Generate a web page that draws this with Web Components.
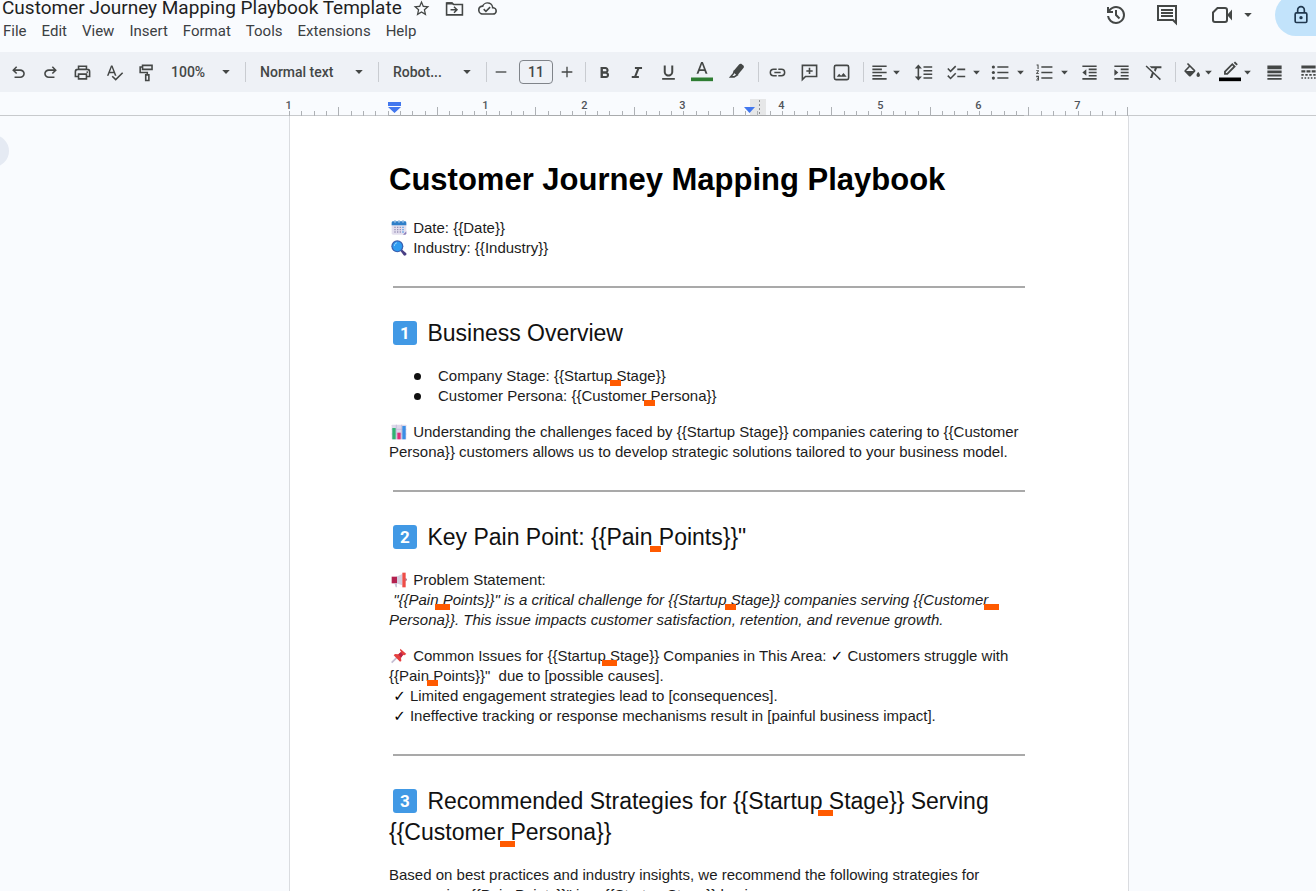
<!DOCTYPE html>
<html lang="en">
<head>
<meta charset="utf-8">
<title>Customer Journey Mapping Playbook Template</title>
<style>
  html, body { margin: 0; height: 100%; }
  body { background: #f9fbfe; color: #444746; font-family: Roboto, "Liberation Sans", sans-serif; overflow: hidden; }
</style>
</head>
<body>
<docs-app></docs-app>

<script>
const define = (name, html, setup) => {
  const template = document.createElement('template');
  template.innerHTML = html;
  customElements.define(name, class extends HTMLElement {
    constructor() {
      super();
      this.attachShadow({ mode: 'open' }).append(template.content.cloneNode(true));
    }
    connectedCallback() { if (setup) setup(this, this.shadowRoot); }
  });
};

const S = 'fill="none" stroke="currentColor" stroke-width="2"';
const ICONS = {
  undo: '<path d="M7 19v-2h7.1q1.6 0 2.7-1t1.2-2.5-1.2-2.5-2.7-1H7.8l2.6 2.6L9 14 4 9l5-5 1.4 1.4L7.8 8h6.3q2.4 0 4.2 1.6T20 13.5t-1.7 3.9T14.1 19z"/>',
  redo: '<path transform="matrix(-1 0 0 1 24 0)" d="M7 19v-2h7.1q1.6 0 2.7-1t1.2-2.5-1.2-2.5-2.7-1H7.8l2.6 2.6L9 14 4 9l5-5 1.4 1.4L7.8 8h6.3q2.4 0 4.2 1.6T20 13.5t-1.7 3.9T14.1 19z"/>',
  print: `<path ${S} d="M7 8V4h10v4M6 17H3v-6q0-3 3-3h12q3 0 3 3v6h-3M7 14h10v6H7z"/><circle cx="18" cy="11.5" r="1.2"/>`,
  spell: '<path d="M12.45 16h2.09L9.43 3H7.57L2.46 16h2.09l1.12-3h5.64zM6.43 11 8.5 5.48 10.57 11zm15.16.59-8.09 8.09L9.83 16l-1.41 1.41 5.09 5.09L23 13z"/>',
  paint: `<path ${S} d="M7 3h12v5H7zM7 5H4v7h9v3M11 15h4v7h-4z"/>`,
  minus: '<path d="M4 11h16v2H4z"/>',
  plus: '<path d="M11 4h2v7h7v2h-7v7h-2v-7H4v-2h7z"/>',
  bold: '<path d="M15.6 11.8c1-.7 1.6-1.8 1.6-2.8 0-2.3-1.8-4-4-4H7v14h7c2.1 0 3.7-1.7 3.7-3.8 0-1.5-.8-2.8-2.1-3.4zM10 7.5h3a1.5 1.5 0 0 1 0 3h-3zm3.5 9H10v-3h3.5a1.5 1.5 0 0 1 0 3z"/>',
  italic: '<path d="M10 5v2.5h2.7l-3.5 9H6V19h9v-2.5h-3l3.5-9H19V5z"/>',
  underline: '<path d="M12 17c3.3 0 6-2.7 6-6V3h-2.5v8a3.5 3.5 0 0 1-7 0V3H6v8c0 3.3 2.7 6 6 6zM4 19v2h16v-2z"/>',
  color: '<path d="M11 1 6 14h2.1l1.2-3.2h5.4l1.2 3.2H18L13 1zM9.9 9 12 3.4 14.1 9z"/><path fill="#2e7d32" d="M0 18h24v4H0z"/>',
  marker: `<path ${S} d="m9 11-1 2.500L4.500 17.500H9L13 15z"/><path d="m8 10.500 7.500-9q1.200-1 2.500-.500l3 2.500q.8 1.200 0 2.500L13.500 15z"/>`,
  link: '<path d="M3.9 12c0-1.71 1.39-3.1 3.1-3.1h4V7H7a5 5 0 0 0 0 10h4v-1.9H7c-1.71 0-3.1-1.39-3.1-3.1zM8 13h8v-2H8zm9-6h-4v1.9h4a3.1 3.1 0 0 1 0 6.2h-4V17h4a5 5 0 0 0 0-10z"/>',
  addcomment: `<path ${S} d="M3 21V3h18v14H7z"/><path d="M11 6h2v3h3v2h-3v3h-2v-3H8V9h3z"/>`,
  image: `<rect ${S} x="3" y="3" width="18" height="18" rx="2"/><path d="m6 17.500 3-4 2.500 2.500 3-3.500 4 5z"/>`,
  align: '<path d="M3 3h18v2H3zm0 4h12v2H3zm0 4h18v2H3zm0 4h12v2H3zm0 4h18v2H3z"/>',
  spacing: '<path d="M12 4h11v2H12zm0 4.7h11v2H12zm0 4.600h11v2H12zM12 18h11v2H12zM5.500 2 1 7h3.500v10H1l4.500 5 4.500-5H6.500V7H10z"/>',
  checklist: `<path ${S} d="m1 7 3.500 3.500L11 4M1 16l3.500 3.500L11 13"/><path d="M13 7h10v2H13zm0 9h10v2H13z"/>`,
  bullets: '<circle cx="3" cy="5" r="2"/><circle cx="3" cy="12" r="2"/><circle cx="3" cy="19" r="2"/><path d="M8 4h14v2H8zM8 11h14v2H8zm0 7h14v2H8z"/>',
  numbers: '<path d="M8 4h14v2H8zm0 7h14v2H8zm0 7h14v2H8zM2 2h2.500v5.500H3.200V3.200H2zm-.5 7H5v1.200l-2 2.600h2V14H1.500v-1.200l2-2.600h-2zm0 7H5v6H1.500v-1.200h2.200v-.8H2.500v-1.200h1.200v-.8H1.500z"/>',
  outdent: '<path d="M3 3h18v2H3zm8 4h10v2H11zm0 4h10v2H11zm0 4h10v2H11zm-8 4h18v2H3zm5-11v8l-5-4z"/>',
  indent: '<path d="M3 3h18v2H3zm8 4h10v2H11zm0 4h10v2H11zm0 4h10v2H11zm-8 4h18v2H3zM3 8v8l5-4z"/>',
  clear: '<path d="m3.300 3-1.300 1.300L10 12l-2.500 7h2.800l1.900-5.100L20 21.700l1.400-1.400zM7 4l2.600 2.500h4l-1 2.700 2 2 1.800-4.700H22V4z"/>',
  fill: '<path d="M16.600 8.900 7.600 0 6.200 1.400l2.400 2.400-5.200 5.200c-.6.600-.6 1.500 0 2.100l5.500 5.500c.6.600 1.500.600 2.100 0l5.500-5.500c.6-.6.600-1.500 0-2.200zM5.200 10 10 5.200l4.800 4.800zM20.500 11.500s-2.200 2.400-2.200 3.900a2.200 2.200 0 0 0 4.400 0c0-1.500-2.200-3.900-2.200-3.900z"/>',
  pencil: `<path ${S} d="m6.500 11.500 8-8 2.500 2.500-8 8H6.500z"/><path d="m16 2 1.500-1.500 3 3L19 5z"/><path fill="#000" d="M0 18h24v4H0z"/>`,
  weight: '<path d="M3 3h18v5H3zm0 6.500h18V13H3zm0 5h18V17H3zm0 4.500h18v2H3z"/>',
  dash: '<path d="M3 3h18v4H3zm0 6h5v3H3zm6.500 0h5v3h-5zm6.500 0h5v3h-5zM3 14h3v2H3zm5 0h3v2H8zm5 0h3v2h-3zm5 0h3v2h-3zM3 18h2v2H3zm4 0h2v2H7zm4 0h2v2h-2zm4 0h2v2h-2zm4 0h2v2h-2z"/>',
  star: '<path d="m22 9.240-7.190-.62L12 2 9.190 8.630 2 9.240l5.460 4.730L5.820 21 12 17.270 18.180 21l-1.630-7.030zM12 15.400l-3.760 2.270 1-4.280-3.320-2.880 4.380-.38L12 6.100l1.710 4.040 4.380.38-3.320 2.880 1 4.280z"/>',
  move: `<path ${S} d="M2 5h7l2 2h11v13H2z"/><path d="M2 4h7l2 3H2zM12 9l4.500 4.500L12 18l-1.300-1.300 2.200-2.200H7v-2h5.900l-2.200-2.200z"/>`,
  cloud: '<path d="M19.350 10.040A7.490 7.490 0 0 0 12 4C9.110 4 6.600 5.640 5.350 8.040A5.990 5.990 0 0 0 0 14c0 3.310 2.690 6 6 6h13c2.760 0 5-2.240 5-5 0-2.640-2.050-4.780-4.650-4.960zM19 18H6a4 4 0 0 1 0-8h.71a5.500 5.500 0 0 1 10.790 2H19a3 3 0 0 1 0 6zm-9-3.820-2.090-2.090L6.500 13.500 10 17l6.010-6.010-1.410-1.410z"/>',
  history: '<path d="M12 21q-3.450 0-6.010-2.290T3.050 13H5.100q.35 2.600 2.310 4.300T12 19q2.930 0 4.960-2.040T19 12t-2.040-4.960T12 5q-1.730 0-3.230.8T6.250 8H9v2H3V4h2v2.350q1.280-1.600 3.110-2.470T12 3q1.880 0 3.510.71t2.850 1.930 1.930 2.850T21 12t-.71 3.510-1.930 2.850-2.850 1.930T12 21m2.800-4.800L11 12.400V7h2v4.600l3.200 3.200z"/>',
  comment: `<path ${S} d="M3 3h18v17l-3-3H3z"/><path d="M6 6h12v2H6zm0 3h12v2H6zm0 3h12v2H6z"/>`,
  camera: `<path ${S} d="M7.500 5H15q2 0 2 2v10q0 2-2 2H5q-2 0-2-2V9.500z"/><path d="m18 11 4-4.500v11L18 13z"/>`,
  lock: `<rect ${S} x="5" y="9.500" width="14" height="11.500" rx="1.500"/><path ${S} d="M8 9V6a4 4 0 0 1 8 0v3"/><circle cx="12" cy="15.200" r="2"/>`,
  caret: '<path d="M3 7h18l-9 10z"/>',
  calendar: '<rect x="1" y="4" width="22" height="18" rx="2" fill="#e3dfee"/><path d="M1 8V4q0-2 2-2h18q2 0 2 2v4z" fill="#2f7fc9"/><path d="M5 0h2v4H5zm6 0h2v4h-2zm6 0h2v4h-2z" fill="#9fc3e8"/><path d="M6 10v9m4-9v9m4-9v9" stroke="#9a93b8" stroke-width="2" stroke-dasharray="2 1.500" fill="none"/><path d="M18 10v9" stroke="#4b9ae8" stroke-width="2" stroke-dasharray="2 1.500" fill="none"/><path d="m18 22 5-5v3q0 2-2 2z" fill="#8a7cb8"/>',
  search: '<path d="m14 16 2-2 7 6q1 2-1 3t-3 0z" fill="#4a3f84"/><circle cx="9.500" cy="9.500" r="9" fill="#3b5fae"/><circle cx="9.500" cy="9.500" r="7.200" fill="#2e9bf0"/><path d="M5 9q0-4 4-5" stroke="#8fd0ff" stroke-width="1.500" fill="none"/>',
  chart: '<rect x="1" y="1" width="22" height="22" rx="1" fill="#ddd8ea"/><path d="M1 8h22M1 15h22M8 1v22M16 1v22" stroke="#bdb5d4"/><path d="M2 6h5v17H2z" fill="#2fb573"/><path d="M9.500 13h5v10h-5z" fill="#e0307a"/><path d="M17 3h5v20h-5z" fill="#3a8ee6"/>',
  megaphone: '<path d="m8 7 9-4v17l-9-3z" fill="#d5cfe0"/><path d="M1 7h8v10H1z" fill="#b3214f"/><path d="M17 1h5v22h-5z" fill="#ee4d48"/><path d="M22 9q3 2.500 0 5z" fill="#8d2946"/><path d="M5 17h4v6H7z" fill="#c9c3d6"/>',
  pin: '<path d="M9 14 1 22" stroke="#c4bdd2" stroke-width="2.500"/><path d="m14 1 9 8-3 2-2-.5-3 4 .5 5-2 1L4 11l2-2 5 .5 4-4-1.500-2z" fill="#e5403f"/><path d="m11 9.500 4 5 3-4-3-4z" fill="#b92347"/>'
};

define('svg-icon', `<style>
  :host { display: inline-block; width: 20px; height: 20px; flex: none; }
  svg { display: block; width: 100%; height: 100%; overflow: visible; fill: currentColor; }
</style><svg viewBox="0 0 24 24" aria-hidden="true"></svg>`,
(el, root) => { root.querySelector('svg').innerHTML = ICONS[el.getAttribute('name')]; });

define('tool-button', `<style>
  :host { display: block; flex: none; width: 32px; }
  :host([wide]) { width: 36px; }
  :host([menu]) { width: 44px; }
  :host([menu][tight]) { width: 39px; }
  :host([small]) { width: 24px; }
  button { all: unset; box-sizing: border-box; display: flex; align-items: center; width: 100%; height: 28px; cursor: pointer; color: inherit; }
  .face { flex: 1; display: flex; justify-content: center; }
  .caret { width: 9px; height: 9px; margin-right: 4px; display: none; }
  :host([menu]) .caret { display: block; }
  svg-icon { width: 19px; height: 19px; }
  :host([small]) svg-icon { width: 16px; height: 16px; }
  :host([swatch]) .face svg-icon { width: 22px; height: 22px; }
</style><button type="button"><span class="face"></span><svg-icon class="caret" name="caret"></svg-icon></button>`,
(el, root) => {
  root.querySelector('button').setAttribute('aria-label', el.getAttribute('label'));
  root.querySelector('.face').innerHTML = `<svg-icon name="${el.getAttribute('icon')}"></svg-icon>`;
});

define('tool-select', `<style>
  :host { display: flex; flex: none; align-items: center; position: relative; width: 77px; }
  :host([size="medium"]) { width: 99px; }
  :host([size="large"]) { width: 124px; }
  select { appearance: none; border: 0; margin: 0; background: none; width: 100%; height: 28px; padding: 0 20px 0 9px; font: 500 14px Roboto, sans-serif; color: inherit; }
  :host([size]) select { padding-left: 12px; }
  svg-icon { position: absolute; right: 8px; width: 10px; height: 10px; pointer-events: none; }
</style><select><option></option></select><svg-icon name="caret"></svg-icon>`,
(el, root) => {
  root.querySelector('select').setAttribute('aria-label', el.getAttribute('label'));
  root.querySelector('option').textContent = el.getAttribute('value');
});

define('tool-divider', `<style>
  :host { display: block; flex: none; width: 1px; height: 20px; margin: 0 2px 0 6px; background: #c9ccd1; }
</style>`);

define('docs-header', `<style>
  :host { display: flex; justify-content: space-between; height: 52px; flex: none; }
  .title { display: flex; align-items: center; gap: 14px; height: 16px; padding-left: 2px; color: #1f1f1f; }
  h1 { margin: 0 -4px 0 0; font: 400 19px/16px Roboto, sans-serif; white-space: nowrap; }
  .title svg-icon { width: 19px; height: 19px; color: #444746; }
  nav { display: flex; gap: 15px; padding: 5px 0 0 3px; }
  nav a { font-size: 15px; line-height: 20px; color: #3c4043; text-decoration: none; }
  .actions { display: flex; align-items: center; height: 30px; }
  .actions svg-icon { width: 24px; height: 24px; }
  .actions .history { margin-right: 27px; }
  .actions .comment { margin-right: 31px; }
  .actions .caret { width: 10px; height: 10px; margin: 0 22px 0 9px; }
  button { all: unset; box-sizing: border-box; flex: none; width: 41px; height: 42px; padding-left: 16px; display: flex; align-items: center; background: #c2e3fb; border-radius: 21px 0 0 21px; color: #20384f; }
  .actions button svg-icon { width: 20px; height: 20px; }
</style>
<div>
  <div class="title"><h1>Customer Journey Mapping Playbook Template</h1>
    <svg-icon name="star"></svg-icon><svg-icon name="move"></svg-icon><svg-icon name="cloud"></svg-icon></div>
  <nav><a href="#">File</a><a href="#">Edit</a><a href="#">View</a><a href="#">Insert</a><a href="#">Format</a><a href="#">Tools</a><a href="#">Extensions</a><a href="#">Help</a></nav>
</div>
<div class="actions">
  <svg-icon class="history" name="history"></svg-icon><svg-icon class="comment" name="comment"></svg-icon>
  <svg-icon name="camera"></svg-icon><svg-icon class="caret" name="caret"></svg-icon>
  <button type="button" aria-label="Share"><svg-icon name="lock"></svg-icon></button>
</div>`);

define('docs-toolbar', `<style>
  :host { display: flex; align-items: center; flex: none; height: 40px; padding-left: 2px; background: #eef1f6; overflow: hidden; }
  input { box-sizing: border-box; flex: none; width: 34px; height: 24px; margin: 0 2px 0 6px; padding: 0; border: 1px solid #80848a; border-radius: 4px; background: none; text-align: center; font: 500 14px Roboto, sans-serif; color: inherit; }
</style>
<tool-button icon="undo" label="Undo"></tool-button>
<tool-button icon="redo" label="Redo"></tool-button>
<tool-button icon="print" label="Print"></tool-button>
<tool-button icon="spell" label="Spelling"></tool-button>
<tool-button icon="paint" label="Paint format"></tool-button>
<tool-select value="100%" label="Zoom"></tool-select>
<tool-divider></tool-divider>
<tool-select size="large" value="Normal text" label="Styles"></tool-select>
<tool-divider></tool-divider>
<tool-select size="medium" value="Robot..." label="Font"></tool-select>
<tool-divider></tool-divider>
<tool-button small icon="minus" label="Decrease font size"></tool-button>
<input value="11" aria-label="Font size">
<tool-button small icon="plus" label="Increase font size"></tool-button>
<tool-divider></tool-divider>
<tool-button icon="bold" label="Bold"></tool-button>
<tool-button icon="italic" label="Italic"></tool-button>
<tool-button icon="underline" label="Underline"></tool-button>
<tool-button wide swatch icon="color" label="Text color"></tool-button>
<tool-button icon="marker" label="Highlight color"></tool-button>
<tool-divider></tool-divider>
<tool-button icon="link" label="Insert link"></tool-button>
<tool-button icon="addcomment" label="Add comment"></tool-button>
<tool-button icon="image" label="Insert image"></tool-button>
<tool-divider></tool-divider>
<tool-button menu tight icon="align" label="Align"></tool-button>
<tool-button wide icon="spacing" label="Line spacing"></tool-button>
<tool-button menu icon="checklist" label="Checklist"></tool-button>
<tool-button menu icon="bullets" label="Bulleted list"></tool-button>
<tool-button menu icon="numbers" label="Numbered list"></tool-button>
<tool-button icon="outdent" label="Decrease indent"></tool-button>
<tool-button icon="indent" label="Increase indent"></tool-button>
<tool-button icon="clear" label="Clear formatting"></tool-button>
<tool-divider></tool-divider>
<tool-button menu tight icon="fill" label="Fill color"></tool-button>
<tool-button menu tight swatch icon="pencil" label="Border color"></tool-button>
<tool-button wide icon="weight" label="Border width"></tool-button>
<tool-button icon="dash" label="Border dash"></tool-button>`);

define('docs-ruler', `<style>
  :host { display: grid; grid-template-columns: 289fr 840px 187fr; flex: none; height: 23px; border-bottom: 1px solid #c8cacd; }
  svg { grid-column: 2; display: block; width: 840px; height: 24px; overflow: visible; }
  text { font: 500 11px Roboto, sans-serif; fill: #50545a; text-anchor: middle; }
</style><svg aria-label="Ruler"></svg>`,
(el, root) => {
  const inch = 838 / 8.5;
  let out = '<path d="M99 23.500h636" stroke="#a9abad"/><rect x="461" y="7" width="16" height="16" fill="#e6e7e8"/><path d="M470.500 8v14" stroke="#8b8d90" stroke-dasharray="2 2"/>';
  for (let i = 0; i <= 68; i++) {
    const x = Math.round(i * inch / 8) + .5;
    if (i % 8 === 0 && i < 68) {
      const n = i / 8 - 1;
      if (n) out += `<text x="${x - 1}" y="17">${Math.abs(n)}</text>`;
    }
    out += `<path d="M${x} ${i % 8 === 4 ? 15 : 19}V24" stroke="#aeb1b5"/>`;
  }
  out += '<path d="M99 10h13v4H99zM99 15h13l-6.500 6z" fill="#4277ee"/><path d="M455 15h11l-5.500 6z" fill="#4277ee"/>';
  root.querySelector('svg').innerHTML = out;
});

define('gap-mark', `<style>
  :host { position: relative; }
  i { position: absolute; left: -2px; bottom: -2px; width: 11px; height: 6px; background: #ff5a00; }
  :host([wide]) i { left: -4px; width: 15px; }
</style><i></i>`);

define('key-cap', `<style>
  :host { display: inline-block; box-sizing: border-box; width: 24px; height: 24px; margin: 0 4px; border-radius: 3px; background: #4199e5; color: #fff; font: 700 17px/24px Roboto, sans-serif; text-align: center; vertical-align: 2px; }
</style><slot></slot>`);

define('docs-document', `<style>
  :host { box-sizing: border-box; display: block; padding: 44px 100px 0 99px; border: solid #dadce0; border-width: 0 1px; background: #fff; color: #1c1c1c; font: 15px/20px "Liberation Sans", Arial, sans-serif; }
  h1 { margin: 0 0 18px; font-size: 31px; line-height: 40px; color: #000; }
  h2 { margin: 0 0 17px; font-size: 23px; line-height: 31px; font-weight: 400; color: #111; }
  p, ul { margin: 0 0 16px; }
  hr { margin: 28px 3px 30px 4px; border: 0; height: 2px; background: #a9a9a9; }
  ul { padding-left: 49px; list-style: none; }
  li { position: relative; }
  li::before { content: ""; position: absolute; left: -24px; top: 7px; width: 7px; height: 7px; border-radius: 50%; background: #111; }
  svg-icon { width: 16px; height: 16px; margin: 0 2px; vertical-align: -3px; }
  .check { font: 700 15px/16px "DejaVu Sans", sans-serif; color: #000; }
</style>
<h1>Customer Journey Mapping Playbook</h1>
<p><svg-icon name="calendar"></svg-icon> Date: {{Date}}<br><svg-icon name="search"></svg-icon> Industry: {{Industry}}</p>
<hr>
<h2><key-cap>1</key-cap> Business Overview</h2>
<ul><li>Company Stage: {{Startup<gap-mark></gap-mark> Stage}}</li><li>Customer Persona: {{Customer<gap-mark></gap-mark> Persona}}</li></ul>
<p><svg-icon name="chart"></svg-icon> Understanding the challenges faced by {{Startup Stage}} companies catering to {{Customer Persona}} customers allows us to develop strategic solutions tailored to your business model.</p>
<hr>
<h2><key-cap>2</key-cap> Key Pain Point: {{Pain<gap-mark></gap-mark> Points}}"</h2>
<p><svg-icon name="megaphone"></svg-icon> Problem Statement:<br><em>&nbsp;"{{Pain<gap-mark wide></gap-mark> Points}}" is a critical challenge for {{Startup<gap-mark></gap-mark> Stage}} companies serving {{Customer<gap-mark wide></gap-mark> Persona}}. This issue impacts customer satisfaction, retention, and revenue growth.</em></p>
<p><svg-icon name="pin"></svg-icon> Common Issues for {{Startup<gap-mark wide></gap-mark> Stage}} Companies in This Area: <span class="check">✓</span> Customers struggle with {{Pain<gap-mark></gap-mark> Points}}"&nbsp; due to [possible causes].<br>&nbsp;<span class="check">✓</span> Limited engagement strategies lead to [consequences].<br>&nbsp;<span class="check">✓</span> Ineffective tracking or response mechanisms result in [painful business impact].</p>
<hr>
<h2><key-cap>3</key-cap> Recommended Strategies for {{Startup<gap-mark wide></gap-mark> Stage}} Serving {{Customer<gap-mark wide></gap-mark> Persona}}</h2>
<p>Based on best practices and industry insights, we recommend the following strategies for overcoming {{Pain Points}}" in a {{Startup Stage}} business.</p>`);

define('docs-app', `<style>
  :host { display: flex; flex-direction: column; height: 100vh; }
  main { flex: 1; min-height: 0; overflow: hidden; display: grid; grid-template-columns: 289fr 840px 187fr; }
  button { all: unset; display: block; width: 32px; height: 32px; margin: 19px 0 0 -23px; border-radius: 50%; background: #e5eaf3; }
</style>
<docs-header></docs-header>
<docs-toolbar></docs-toolbar>
<docs-ruler></docs-ruler>
<main><div><button type="button" aria-label="Show outline"></button></div><docs-document></docs-document></main>`);
</script>
</body>
</html>
